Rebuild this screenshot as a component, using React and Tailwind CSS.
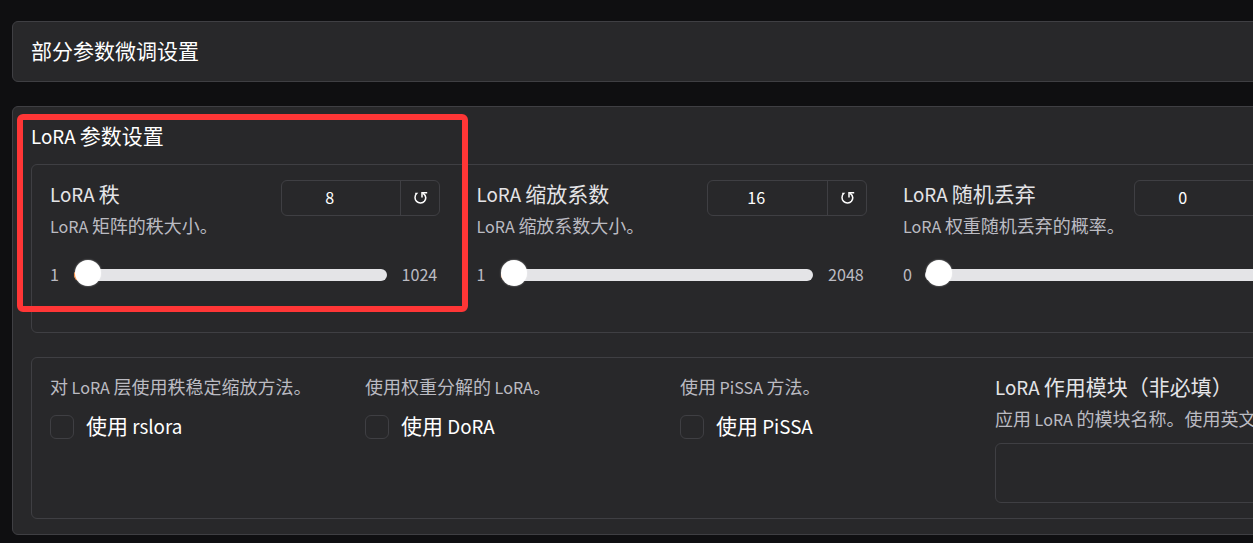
const sliders = [
  { label: "LoRA 秩", info: "LoRA 矩阵的秩大小。", value: "8", min: "1", max: "1024", fill: true },
  { label: "LoRA 缩放系数", info: "LoRA 缩放系数大小。", value: "16", min: "1", max: "2048", fill: true },
  { label: "LoRA 随机丢弃", info: "LoRA 权重随机丢弃的概率。", value: "0", min: "0", max: "", fill: false },
];

const checks = [
  { info: "对 LoRA 层使用秩稳定缩放方法。", label: "使用 rslora" },
  { info: "使用权重分解的 LoRA。", label: "使用 DoRA" },
  { info: "使用 PiSSA 方法。", label: "使用 PiSSA" },
];

// Latin runs are set slightly smaller than the Chinese characters beside them.
function Mixed({ children }) {
  return children
    .split(/([ -~]+)/)
    .filter(Boolean)
    .map((run, i) =>
      /^[ -~]/.test(run) ? (
        <span key={i} className="text-[0.895em]">{run}</span>
      ) : (
        run
      )
    );
}

function Label({ children }) {
  return <div className="h-8 whitespace-pre text-[21px] leading-8 text-[#e4e4e7]"><Mixed>{children}</Mixed></div>;
}

function Info({ children }) {
  return <div className="h-8 whitespace-pre text-[18px] leading-8 text-[#bbbbc2]"><Mixed>{children}</Mixed></div>;
}

function ResetIcon() {
  return (
    <svg className="ml-0.5" width="14" height="14" viewBox="0 0 14 14" fill="none" stroke="white" strokeWidth="1.5">
      <path d="M1.2 2.6H2.6C.4 5 .6 8.4 2.6 10.4c2.2 2.2 6 2 7.8-.2 2-2.6 1.4-5.8-1.4-8" />
      <path d="M13.2 1.8H8v4.6" />
    </svg>
  );
}

function SliderField({ label, info, value, min, max, fill }) {
  return (
    <div className="w-[390px] shrink-0">
      <div className="flex justify-between">
        <div>
          <Label>{label}</Label>
          <Info>{info}</Info>
        </div>
        <div className="mt-[3px] flex h-9 w-[159.5px] rounded-md border border-[#3f3f43] text-[18px] text-white">
          <div className="flex flex-1 items-center justify-center pb-0.5 pr-[22px]"><Mixed>{value}</Mixed></div>
          <div className="flex w-[39px] items-center justify-center border-l border-[#3f3f43]"><ResetIcon /></div>
        </div>
      </div>
      <div className="mt-4 flex h-8 items-center text-[18px] text-[#bbbbc2]">
        <div className={fill ? "w-6 shrink-0" : "w-[22px] shrink-0"}><Mixed>{min}</Mixed></div>
        <div className={`relative mt-[3px] h-3 shrink-0 rounded-full bg-[#e4e4e7] ${fill ? "w-[312.5px]" : "w-[341px]"}`}>
          {fill && <div className="absolute left-0 top-0 h-3 w-4 rounded-l-full bg-[#f97316]" />}
          <div className="absolute -top-[9px] left-[0.5px] size-[26px] rounded-full bg-white shadow-[0_0_2px_rgba(255,255,255,0.6)]" />
        </div>
        <div className="ml-[15px]"><Mixed>{max}</Mixed></div>
      </div>
    </div>
  );
}

function CheckField({ info, label }) {
  return (
    <div className="w-[315px] shrink-0">
      <Info>{info}</Info>
      <div className="mt-[7px] flex h-8 items-center gap-3">
        <div className="mt-1 size-6 rounded-md border border-[#3f3f43]" />
        <div className="whitespace-pre text-[21px] leading-8 text-white"><Mixed>{label}</Mixed></div>
      </div>
    </div>
  );
}

export default function App() {
  return (
    <div
      lang="zh-CN"
      className="relative h-[543px] w-full overflow-hidden bg-[#0f0f11] pl-3 pt-[21px] font-['Noto_Sans_CJK_SC',sans-serif]"
    >
      <section className="h-[61px] w-[1330px] rounded-md border border-[#3f3f43] bg-[#28282a] pl-[18px] pt-3">
        <h2 className="text-[21px] leading-8 text-white">部分参数微调设置</h2>
      </section>

      <section className="mt-6 h-[429px] w-[1330px] rounded-md border border-[#3f3f43] bg-[#28282a] px-[18px] pt-3">
        <h2 className="h-8 whitespace-pre text-[21px] leading-8 text-white"><Mixed>LoRA 参数设置</Mixed></h2>
        <div className="mt-[13px] flex h-[169px] gap-[36.5px] rounded-md border border-[#3f3f43] pl-[18px] pt-3">
          {sliders.map((s) => <SliderField key={s.label} {...s} />)}
        </div>
        <div className="mt-6 flex h-[162px] rounded-md border border-[#3f3f43] pl-[18px] pt-3">
          {checks.map((c) => <CheckField key={c.label} {...c} />)}
          <div className="w-[315px] shrink-0">
            <Label>LoRA 作用模块（非必填）</Label>
            <Info>应用 LoRA 的模块名称。使用英文逗号分隔多个名称。</Info>
            <div className="mt-[9px] h-[60px] rounded-md border border-[#3f3f43]" />
          </div>
        </div>
      </section>

      <div className="pointer-events-none absolute left-[17px] top-[114px] h-[198px] w-[451px] rounded-md border-6 border-[#ff3636]" />
    </div>
  );
}
